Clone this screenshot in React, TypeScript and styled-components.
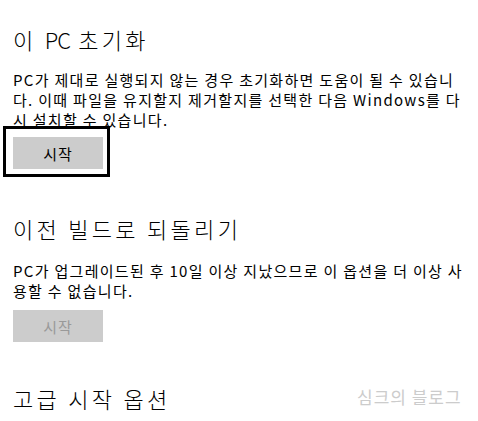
import styled, { createGlobalStyle } from 'styled-components'

const GlobalStyle = createGlobalStyle`
  html, body {
    margin: 0;
    padding: 0;
    background: #ffffff;
  }
  body {
    font-family: "Noto Sans CJK KR", "Noto Sans", sans-serif;
    color: #000000;
  }
`

const Page = styled.div`
  position: relative;
  width: 478px;
  height: 421px;
  overflow: hidden;
  padding: 25px 0 0 13px;
  box-sizing: border-box;
`

const Section = styled.section<{ $gap: number }>`
  display: flex;
  flex-direction: column;
  align-items: flex-start;
  margin-bottom: ${p => p.$gap}px;
`

const Title = styled.h2<{ $below: number }>`
  margin: 0 0 ${p => p.$below}px;
  font-size: 22px;
  line-height: 28px;
  font-weight: 300;
  letter-spacing: 3.3px;
`

// latin letters sit tighter than hangul in the title font
const Latin = styled.span`
  letter-spacing: -1px;
`

const Description = styled.p`
  margin: 0;
  width: 451px;
  font-size: 15px;
  line-height: 20px;
  letter-spacing: 1.3px;
  word-break: break-all;
`

const Button = styled.button<{ $focused?: boolean; $top: number }>`
  position: relative;
  margin-top: ${p => p.$top}px;
  width: 90px;
  height: 32px;
  border: none;
  padding: 0;
  background: #cccccc;
  font-family: inherit;
  font-size: 15px;
  letter-spacing: 1px;
  color: #000000;

  &:disabled {
    color: #999999;
  }

  ${p => p.$focused && `
    &::after {
      content: '';
      position: absolute;
      left: -10px;
      top: -11px;
      right: -7px;
      bottom: -8px;
      border: 3px solid #000000;
    }
  `}
`

const Watermark = styled.div`
  position: absolute;
  left: 357px;
  top: 385px;
  font-size: 17px;
  line-height: 24px;
  letter-spacing: 1px;
  color: #cccccc;
`

export default function App() {
  return (
    <>
      <GlobalStyle />
      <Page>
        <Section $gap={45}>
          <Title $below={17}>이 <Latin>PC</Latin> 초기화</Title>
          <Description>
            PC가 제대로 실행되지 않는 경우 초기화하면 도움이 될 수 있습니다. 이때 파일을 유지할지 제거할지를 선택한 다음 Windows를 다시 설치할 수 있습니다.
          </Description>
          <Button $focused $top={7}>시작</Button>
        </Section>
        <Section $gap={42}>
          <Title $below={19}>이전 빌드로 되돌리기</Title>
          <Description>
            PC가 업그레이드된 후 10일 이상 지났으므로 이 옵션을 더 이상 사용할 수 없습니다.
          </Description>
          <Button disabled $top={9}>시작</Button>
        </Section>
        <Section $gap={0}>
          <Title $below={0}>고급 시작 옵션</Title>
        </Section>
        <Watermark>심크의 블로그</Watermark>
      </Page>
    </>
  )
}
